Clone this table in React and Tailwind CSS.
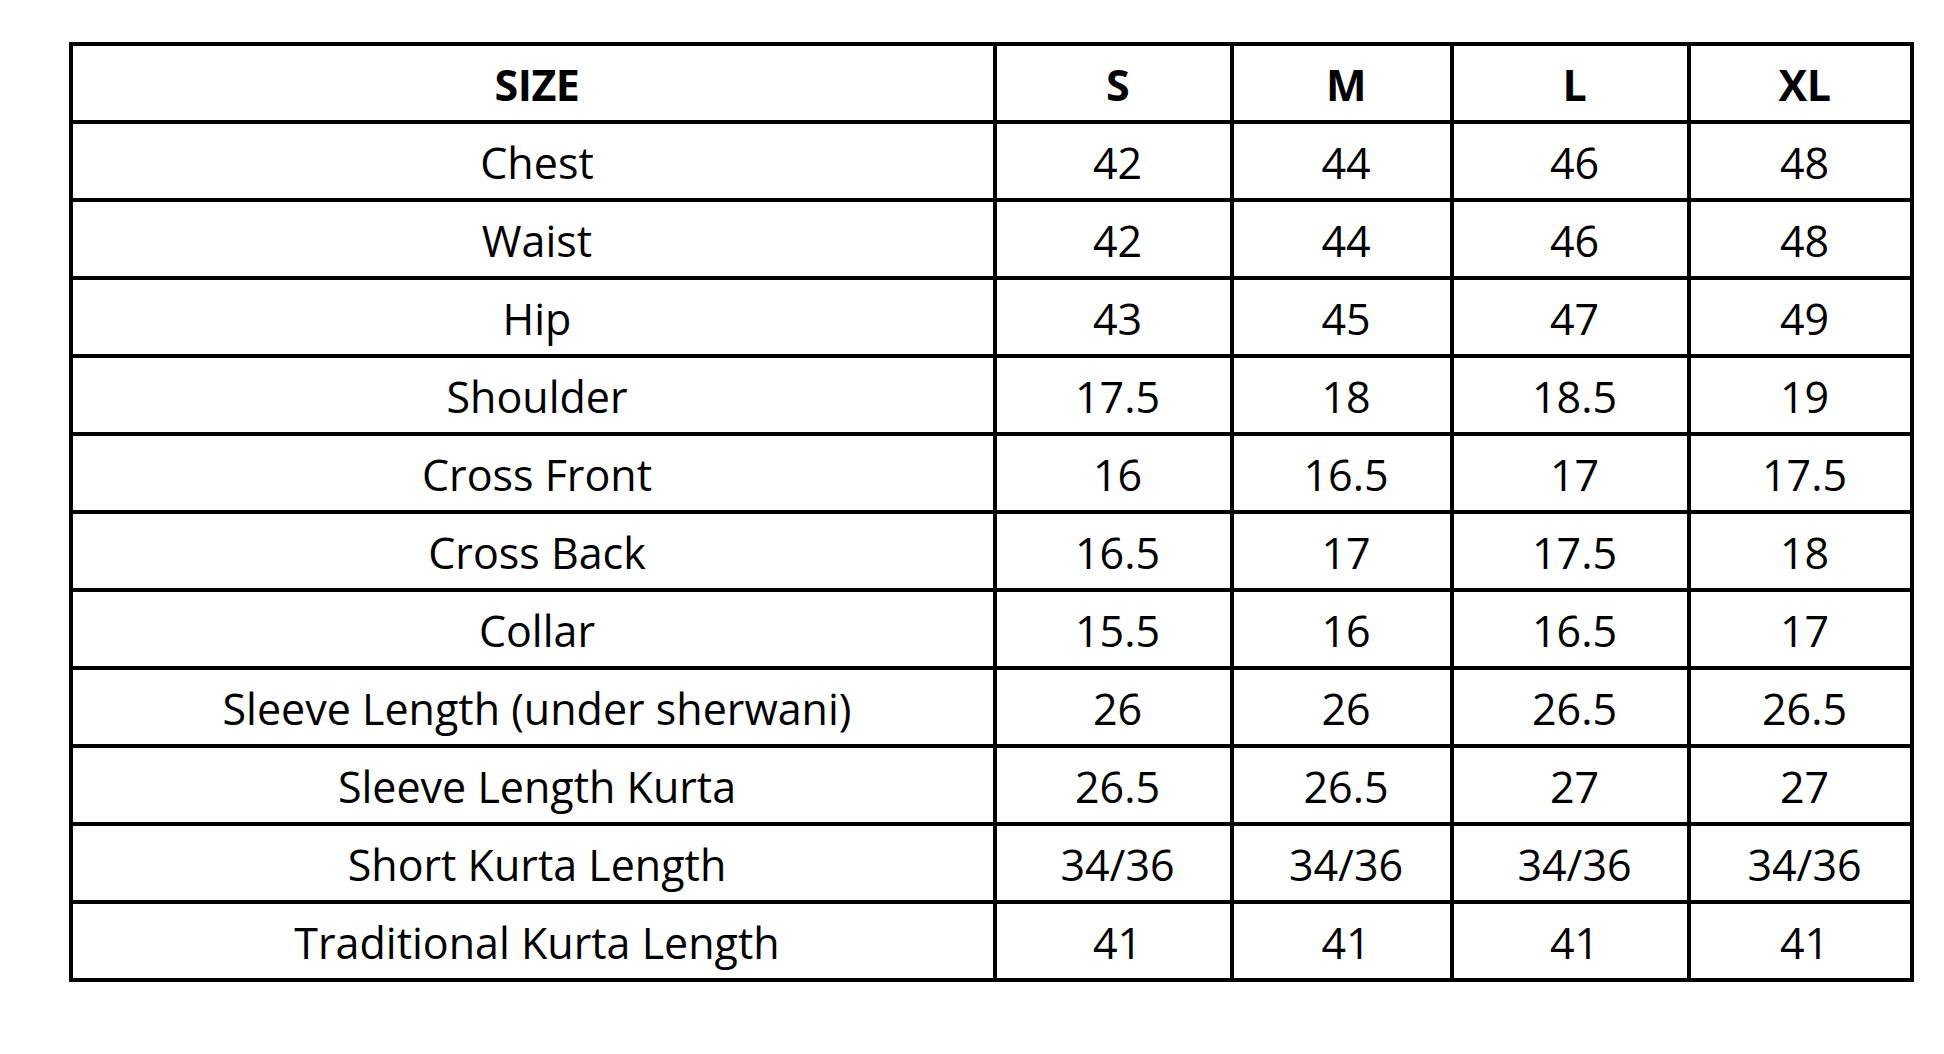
import React from "react";

const sizes = ["S", "M", "L", "XL"];

const rows = [
  ["Chest", "42", "44", "46", "48"],
  ["Waist", "42", "44", "46", "48"],
  ["Hip", "43", "45", "47", "49"],
  ["Shoulder", "17.5", "18", "18.5", "19"],
  ["Cross Front", "16", "16.5", "17", "17.5"],
  ["Cross Back", "16.5", "17", "17.5", "18"],
  ["Collar", "15.5", "16", "16.5", "17"],
  ["Sleeve Length (under sherwani)", "26", "26", "26.5", "26.5"],
  ["Sleeve Length Kurta", "26.5", "26.5", "27", "27"],
  ["Short Kurta Length", "34/36", "34/36", "34/36", "34/36"],
  ["Traditional Kurta Length", "41", "41", "41", "41"],
];

const Cell = ({ children, bold }) => (
  <div
    className={`h-[78px] flex items-center justify-center pt-[3px] pl-[8px] border-r-4 border-b-4 border-black text-black text-[43px] leading-none whitespace-nowrap ${bold ? "font-bold tracking-[-0.5px]" : "font-normal"}`}
  >
    {children}
  </div>
);

export default function App() {
  return (
    <div className="w-[1944px] h-[1054px] bg-white pl-[69px] pt-[42px] font-['Open_Sans','Lato',sans-serif]">
      <div className="grid grid-cols-[924px_237px_220px_237px_223px] w-[1845px] border-l-4 border-t-4 border-black">
        <Cell bold>SIZE</Cell>
        {sizes.map((s) => (
          <Cell key={s} bold>{s}</Cell>
        ))}
        {rows.map((row) =>
          row.map((value, i) => <Cell key={row[0] + i}>{value}</Cell>)
        )}
      </div>
    </div>
  );
}
